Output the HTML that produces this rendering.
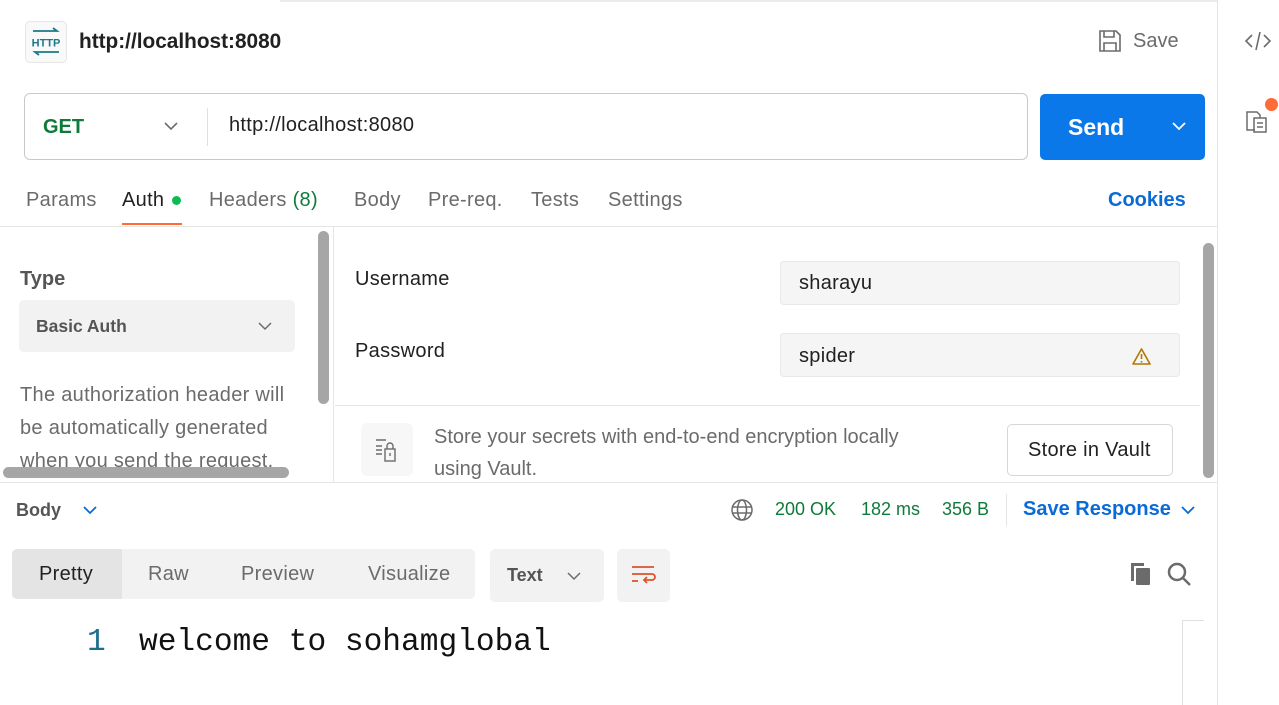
<!DOCTYPE html>
<html><head><meta charset="utf-8"><style>
*{margin:0;padding:0;box-sizing:border-box}
body{width:1279px;height:705px;position:relative;overflow:hidden;background:#fff;font-family:"Liberation Sans",sans-serif;color:#212121}
.a{position:absolute;white-space:nowrap}
.g{color:#6b6b6b}
.t{letter-spacing:0.3px}
</style></head><body>
<div class="a" style="left:280px;top:0;width:937px;height:2px;background:#ececec"></div>
<div class="a" style="left:1217px;top:0;width:1px;height:705px;background:#e6e6e6"></div>
<!-- header -->
<div class="a" style="left:25px;top:21px;width:42px;height:42px;border:1px solid #e6e6e6;border-radius:5px;background:#f9f9f9"></div>
<svg class="a" style="left:31px;top:27px" width="30" height="30" viewBox="0 0 30 30"><path d="M2 4h24l-4-3M28 25H4l4 3" stroke="#1a7a8a" stroke-width="1.8" fill="none"/><text x="15" y="19.5" text-anchor="middle" font-size="11" font-weight="bold" font-family="Liberation Sans" fill="#1a7a8a">HTTP</text></svg>
<div class="a" style="left:79px;top:30px;font-size:20.8px;font-weight:bold;color:#212121">http://localhost:8080</div>
<svg class="a" style="left:1098px;top:29px" width="24" height="24" viewBox="0 0 24 24" fill="none" stroke="#6b6b6b" stroke-width="1.6"><path d="M2 2h16l4 4v16H2z"/><path d="M6 2v6h10V2M6 22v-8h12v8"/></svg>
<div class="a g" style="left:1133px;top:30px;font-size:20px">Save</div>
<svg class="a" style="left:1244px;top:30px" width="28" height="22" viewBox="0 0 28 22" fill="none" stroke="#6b6b6b" stroke-width="1.6"><path d="M8 5l-6 6 6 6M20 5l6 6-6 6M16 2l-4 18"/></svg>
<svg class="a" style="left:1245px;top:108px" width="26" height="26" viewBox="0 0 26 26" fill="none" stroke="#6b6b6b" stroke-width="1.5"><path d="M10 22H2V4h10l3 3v3"/><path d="M9 10h12v14H9z"/><path d="M12 15h6M12 19h6"/></svg>
<div class="a" style="left:1265px;top:98px;width:13px;height:13px;border-radius:50%;background:#ff6c37"></div>
<!-- url bar -->
<div class="a" style="left:24px;top:93px;width:1004px;height:67px;border:1px solid #c9c9c9;border-radius:6px"></div>
<div class="a" style="left:43px;top:116px;font-size:20px;font-weight:bold;color:#0f7b3a">GET</div>
<svg class="a" style="left:163px;top:120px" width="16" height="12" viewBox="0 0 16 12"><path d="M2 3l6 6 6-6" stroke="#6b6b6b" stroke-width="1.6" fill="none"/></svg>
<div class="a" style="left:207px;top:108px;width:1px;height:38px;background:#e0e0e0"></div>
<div class="a t" style="left:229px;top:114px;font-size:20px;color:#212121">http://localhost:8080</div>
<div class="a" style="left:1040px;top:94px;width:165px;height:66px;background:#0a78e9;border-radius:5px"></div>
<div class="a" style="left:1068px;top:114px;font-size:23px;font-weight:bold;color:#fff">Send</div>
<svg class="a" style="left:1171px;top:120px" width="16" height="12" viewBox="0 0 16 12"><path d="M2 3l6 6 6-6" stroke="#fff" stroke-width="1.8" fill="none"/></svg>
<!-- tabs -->
<div class="a g t" style="left:26px;top:189px;font-size:20px">Params</div>
<div class="a t" style="left:122px;top:189px;font-size:20px">Auth</div>
<div class="a" style="left:172px;top:196px;width:9px;height:9px;border-radius:50%;background:#0cbb52"></div>
<div class="a g t" style="left:209px;top:189px;font-size:20px">Headers <span style="color:#0f7b3a">(8)</span></div>
<div class="a g t" style="left:354px;top:189px;font-size:20px">Body</div>
<div class="a g t" style="left:428px;top:189px;font-size:20px">Pre-req.</div>
<div class="a g t" style="left:531px;top:189px;font-size:20px">Tests</div>
<div class="a g t" style="left:608px;top:189px;font-size:20px">Settings</div>
<div class="a" style="left:1108px;top:189px;font-size:20px;font-weight:bold;color:#0b6bd6">Cookies</div>
<div class="a" style="left:122px;top:223px;width:60px;height:2px;background:#ff6c37"></div>
<div class="a" style="left:0;top:226px;width:1217px;height:1px;background:#e6e6e6"></div>
<!-- left panel -->
<div class="a" style="left:20px;top:268px;font-size:20px;font-weight:bold;color:#555">Type</div>
<div class="a" style="left:19px;top:300px;width:276px;height:52px;background:#f2f2f2;border-radius:5px"></div>
<div class="a" style="left:36px;top:316px;font-size:17.5px;font-weight:bold;color:#555">Basic Auth</div>
<svg class="a" style="left:257px;top:320px" width="16" height="12" viewBox="0 0 16 12"><path d="M2 3l6 6 6-6" stroke="#6b6b6b" stroke-width="1.5" fill="none"/></svg>
<div class="a g t" style="left:20px;top:379px;font-size:20px;line-height:33px;width:280px;height:89px;overflow:hidden;white-space:normal">The authorization header will be automatically generated when you send the request.</div>
<div class="a" style="left:318px;top:231px;width:11px;height:173px;background:#a6a6a6;border-radius:6px"></div>
<div class="a" style="left:3px;top:467px;width:286px;height:11px;background:#a6a6a6;border-radius:6px"></div>
<div class="a" style="left:333px;top:227px;width:1px;height:255px;background:#e6e6e6"></div>
<!-- right panel -->
<div class="a t" style="left:355px;top:268px;font-size:20px">Username</div>
<div class="a" style="left:780px;top:261px;width:400px;height:44px;background:#f5f5f5;border:1px solid #e8e8e8;border-radius:4px"></div>
<div class="a t" style="left:799px;top:272px;font-size:20px">sharayu</div>
<div class="a t" style="left:355px;top:340px;font-size:20px">Password</div>
<div class="a" style="left:780px;top:333px;width:400px;height:44px;background:#f5f5f5;border:1px solid #e8e8e8;border-radius:4px"></div>
<div class="a t" style="left:799px;top:345px;font-size:20px">spider</div>
<svg class="a" style="left:1131px;top:347px" width="21" height="19" viewBox="0 0 21 19"><path d="M10.5 2L19 17H2z" stroke="#b07800" stroke-width="1.6" fill="none" stroke-linejoin="round"/><path d="M10.5 7v5M10.5 14v1.5" stroke="#b07800" stroke-width="1.6"/></svg>
<div class="a" style="left:335px;top:405px;width:865px;height:1px;background:#e6e6e6"></div>
<div class="a" style="left:361px;top:423px;width:52px;height:53px;background:#f7f7f7;border-radius:6px"></div>
<svg class="a" style="left:374px;top:437px" width="28" height="28" viewBox="0 0 28 28" fill="none" stroke="#6b6b6b" stroke-width="1.4"><path d="M2 3h10M2 9h6M2 13h6M2 17h6"/><rect x="11" y="12" width="10" height="12"/><path d="M13 12V9a3 3 0 016 0v3M16 16v3"/></svg>
<div class="a g" style="left:434px;top:421px;font-size:20px;line-height:32px;white-space:normal;width:505px">Store your secrets with end-to-end encryption locally using Vault.</div>
<div class="a" style="left:1007px;top:424px;width:166px;height:52px;border:1px solid #d6d6d6;border-radius:5px"></div>
<div class="a t" style="left:1028px;top:439px;font-size:20px">Store in Vault</div>
<div class="a" style="left:1203px;top:243px;width:11px;height:235px;background:#a6a6a6;border-radius:6px"></div>
<div class="a" style="left:0;top:482px;width:1217px;height:1px;background:#e6e6e6"></div>
<!-- response bar -->
<div class="a" style="left:16px;top:500px;font-size:18px;font-weight:bold;color:#555">Body</div>
<svg class="a" style="left:82px;top:504px" width="16" height="12" viewBox="0 0 16 12"><path d="M2 3l6 6 6-6" stroke="#0b6bd6" stroke-width="1.8" fill="none"/></svg>
<svg class="a" style="left:730px;top:498px" width="24" height="24" viewBox="0 0 24 24" fill="none" stroke="#6b6b6b" stroke-width="1.5"><circle cx="12" cy="12" r="10"/><ellipse cx="12" cy="12" rx="4.5" ry="10"/><path d="M2 9h20M2 15h20"/></svg>
<div class="a" style="left:775px;top:499px;font-size:18px;color:#0f7b3a">200 OK</div>
<div class="a" style="left:861px;top:499px;font-size:18px;color:#0f7b3a">182 ms</div>
<div class="a" style="left:942px;top:499px;font-size:18px;color:#0f7b3a">356 B</div>
<div class="a" style="left:1006px;top:494px;width:1px;height:32px;background:#e6e6e6"></div>
<div class="a" style="left:1023px;top:498px;font-size:20px;font-weight:bold;color:#0b6bd6">Save Response</div>
<svg class="a" style="left:1180px;top:504px" width="16" height="12" viewBox="0 0 16 12"><path d="M2 3l6 6 6-6" stroke="#0b6bd6" stroke-width="1.8" fill="none"/></svg>
<!-- view tabs -->
<div class="a" style="left:12px;top:549px;width:463px;height:50px;background:#f2f2f2;border-radius:5px"></div>
<div class="a" style="left:12px;top:549px;width:110px;height:50px;background:#e4e4e4;border-radius:5px 0 0 5px"></div>
<div class="a t" style="left:39px;top:563px;font-size:20px">Pretty</div>
<div class="a g t" style="left:148px;top:563px;font-size:20px">Raw</div>
<div class="a g t" style="left:241px;top:563px;font-size:20px">Preview</div>
<div class="a g t" style="left:368px;top:563px;font-size:20px">Visualize</div>
<div class="a" style="left:490px;top:549px;width:114px;height:53px;background:#f2f2f2;border-radius:5px"></div>
<div class="a" style="left:507px;top:565px;font-size:18px;font-weight:bold;color:#555">Text</div>
<svg class="a" style="left:566px;top:570px" width="16" height="12" viewBox="0 0 16 12"><path d="M2 3l6 6 6-6" stroke="#6b6b6b" stroke-width="1.5" fill="none"/></svg>
<div class="a" style="left:617px;top:549px;width:53px;height:53px;background:#f2f2f2;border-radius:5px"></div>
<svg class="a" style="left:630px;top:563px" width="28" height="26" viewBox="0 0 28 26" fill="none" stroke="#e0532b" stroke-width="1.8"><path d="M2 4h22M2 11h20a3 3 0 010 6h-8M17 14l-3 3 3 3M2 18h6"/></svg>
<svg class="a" style="left:1127px;top:561px" width="26" height="26" viewBox="0 0 26 26"><path d="M4 2h13v3H7v15H4z" fill="#6b6b6b"/><rect x="9" y="7" width="14" height="17" rx="1" fill="#6b6b6b"/></svg>
<svg class="a" style="left:1166px;top:561px" width="26" height="26" viewBox="0 0 26 26" fill="none" stroke="#6b6b6b" stroke-width="2.5"><circle cx="11" cy="11" r="8"/><path d="M17 17l7 7"/></svg>
<!-- code -->
<div class="a" style="left:87px;top:625px;font-family:'Liberation Mono',monospace;font-size:31.2px;color:#1d6e8f">1</div>
<div class="a" style="left:139px;top:625px;font-family:'Liberation Mono',monospace;font-size:31.2px;color:#111">welcome to sohamglobal</div>
<div class="a" style="left:1182px;top:620px;width:1px;height:85px;background:#e0e0e0"></div>
<div class="a" style="left:1182px;top:620px;width:22px;height:1px;background:#e0e0e0"></div>
</body></html>
